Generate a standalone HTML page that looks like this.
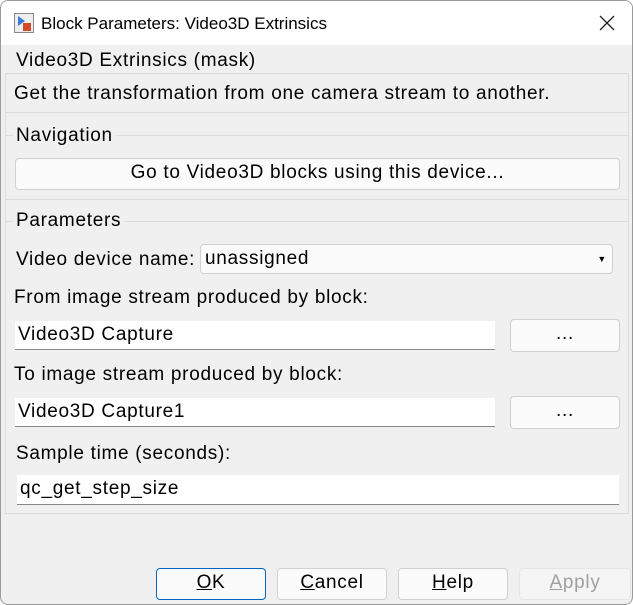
<!DOCTYPE html>
<html><head><style>
body{margin:0;width:633px;height:605px;overflow:hidden;background:#fff;font-family:"Liberation Sans",sans-serif;font-size:19px;letter-spacing:0.7px;color:#000}
.win{position:absolute;left:0;top:0;width:631px;height:603px;border:1px solid #9a9a9a;border-radius:8px;background:#f0f0f0;overflow:hidden}
.tb{position:absolute;left:0;top:0;width:100%;height:44px;background:#fff}
.a{position:absolute;white-space:nowrap;line-height:20px}
.ln{position:absolute;height:1px;background:#dcdcdc}
.btn{position:absolute;background:#fbfbfb;border:1px solid #d0d0d0;border-radius:4px;box-sizing:border-box;text-align:center;line-height:28px}
.tx{position:absolute;background:#fff;border-bottom:1px solid #888;box-sizing:border-box;padding-left:3px;line-height:27px}
</style></head><body><div class="win">
<div class="tb">
<svg style="position:absolute;left:13px;top:12px" width="20" height="20"><rect x="0.5" y="0.5" width="19" height="19" fill="#eee" stroke="#888"/><path d="M4 3 L11 8 L4 13Z" fill="#3a7bd5"/><rect x="9" y="10" width="8" height="8" fill="#d24a2a"/></svg>
<div class="a" style="left:40px;top:13px;font-size:17px;letter-spacing:0">Block Parameters: Video3D Extrinsics</div>
<svg style="position:absolute;left:598px;top:14px" width="16" height="16"><path d="M1 1L15 15M15 1L1 15" stroke="#222" stroke-width="1.3"/></svg>
</div>
<div class="ln" style="left:4px;top:72px;width:624px"></div>
<div class="ln" style="left:4px;top:72px;width:1px;height:440px"></div>
<div class="ln" style="left:627px;top:72px;width:1px;height:440px"></div>
<div class="a" style="left:12px;top:50px;background:#f0f0f0;padding:0 3px">Video3D Extrinsics (mask)</div>
<div class="a" style="left:13px;top:83px">Get the transformation from one camera stream to another.</div>
<div class="ln" style="left:4px;top:111px;width:624px"></div>
<div class="ln" style="left:4px;top:134px;width:624px"></div>
<div class="a" style="left:12px;top:125px;background:#f0f0f0;padding:0 3px">Navigation</div>
<div class="btn" style="left:14px;top:157px;width:605px;height:32px">Go to Video3D blocks using this device...</div>
<div class="ln" style="left:4px;top:198px;width:624px"></div>
<div class="ln" style="left:4px;top:220px;width:624px"></div>
<div class="a" style="left:12px;top:210px;background:#f0f0f0;padding:0 3px">Parameters</div>
<div class="a" style="left:15px;top:249px">Video device name:</div>
<div class="btn" style="left:199px;top:243px;width:413px;height:30px;text-align:left;padding-left:4px">unassigned<span style="position:absolute;right:5px;top:0;font-size:9px">▼</span></div>
<div class="a" style="left:13px;top:287px">From image stream produced by block:</div>
<div class="tx" style="left:14px;top:320px;width:480px;height:29px">Video3D Capture</div>
<div class="btn" style="left:509px;top:318px;width:110px;height:33px">...</div>
<div class="a" style="left:13px;top:364px">To image stream produced by block:</div>
<div class="tx" style="left:14px;top:397px;width:480px;height:29px">Video3D Capture1</div>
<div class="btn" style="left:509px;top:395px;width:110px;height:33px">...</div>
<div class="a" style="left:15px;top:443px">Sample time (seconds):</div>
<div class="tx" style="left:16px;top:474px;width:602px;height:30px">qc_get_step_size</div>
<div class="ln" style="left:4px;top:512px;width:624px"></div>
<div class="btn" style="left:155px;top:567px;width:110px;height:32px;border-color:#0067c0"><u>O</u>K</div>
<div class="btn" style="left:276px;top:567px;width:110px;height:32px"><u>C</u>ancel</div>
<div class="btn" style="left:397px;top:567px;width:110px;height:32px"><u>H</u>elp</div>
<div class="btn" style="left:518px;top:567px;width:112px;height:32px;background:#f5f5f5;border-color:#e5e5e5;color:#a0a0a0"><u>A</u>pply</div>
</div></body></html>
